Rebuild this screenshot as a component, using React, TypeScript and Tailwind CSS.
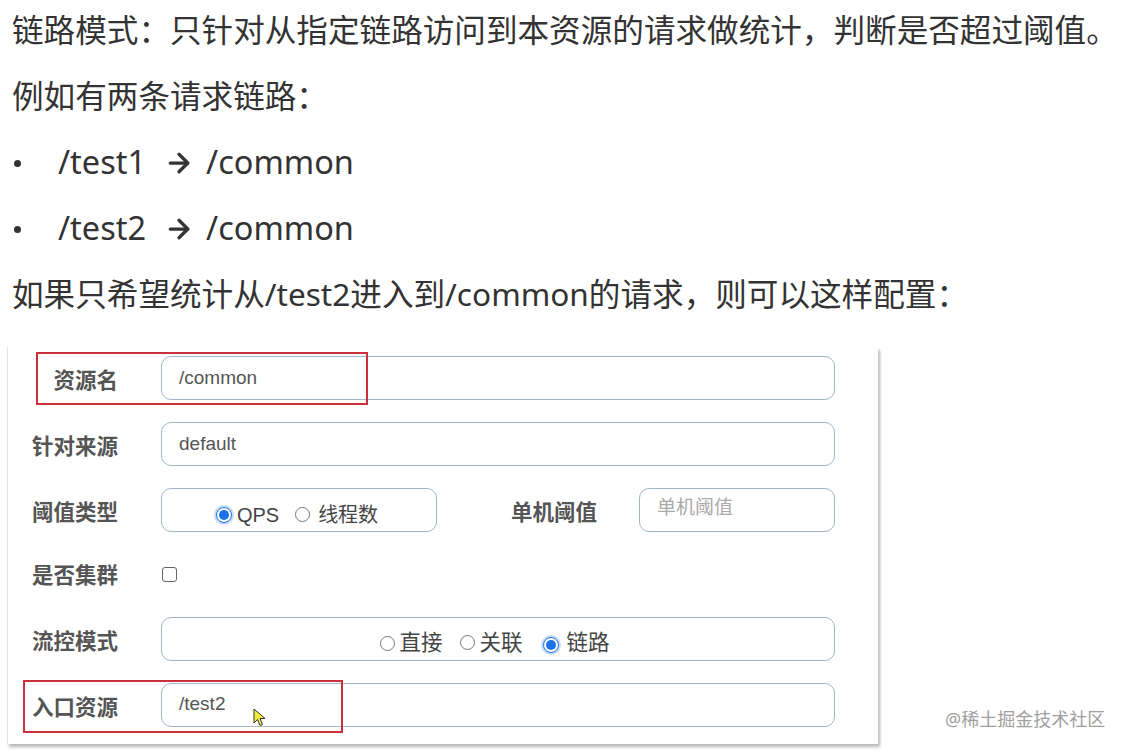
import React from 'react'
import { ArrowRight } from 'lucide-react'

const cjk = { fontFamily: '"Noto Sans", "Noto Sans CJK SC", sans-serif' }
const form = { fontFamily: '"Liberation Sans", "Noto Sans CJK SC", sans-serif' }

const Radio: React.FC<{ checked?: boolean }> = ({ checked }) =>
  checked ? (
    <span className="inline-flex h-[16px] w-[16px] items-center justify-center rounded-full border-[1.5px] border-[#1a73e8] bg-white shadow-[0_0_0_2px_#c7dcf7]">
      <span className="h-[10px] w-[10px] rounded-full bg-[#1a73e8]" />
    </span>
  ) : (
    <span className="inline-block h-[15px] w-[15px] rounded-full border-[1.5px] border-[#777] bg-white" />
  )

const Label: React.FC<{ children: React.ReactNode }> = ({ children }) => (
  <div className="w-[110px] pt-[9px] text-right text-[21.5px] font-bold text-[#555]">{children}</div>
)

const boxCls = 'flex h-[44px] items-center rounded-[10px] border border-[#a3b5c6] bg-white'

const Route: React.FC<{ from: string }> = ({ from }) => (
  <div className="flex h-[66px] items-center text-[32.5px]">
    <span className="ml-[2px] mr-[37px] mt-[2px] h-[7px] w-[7px] shrink-0 rounded-full bg-[#333]" />
    <span>{from}</span>
    <ArrowRight className="ml-[18px] mr-[12px] mt-[2px]" size={30} strokeWidth={2.6} color="#333" />
    <span>/common</span>
  </div>
)

export default function App() {
  return (
    <div className="relative h-[752px] w-[1126px] overflow-hidden bg-white text-[#333]" style={cjk}>
      <div className="whitespace-nowrap pl-[12px] text-[31.6px]">
        <div className="-mt-[3px] flex h-[66px] items-center">链路模式：只针对从指定链路访问到本资源的请求做统计，判断是否超过阈值。</div>
        <div className="flex h-[66px] items-center">例如有两条请求链路：</div>
        <Route from="/test1" />
        <Route from="/test2" />
        <div className="flex h-[66px] items-center">如果只希望统计从/test2进入到/common的请求，则可以这样配置：</div>
      </div>

      <div
        className="relative ml-[7px] mt-[20px] flex w-[871px] flex-col gap-[22px] border-l border-[#e4e4e4] bg-white pb-[17px] pt-[9px] pr-[43px] shadow-[2px_3px_3px_rgba(0,0,0,0.28)]"
        style={form}
      >
        <div className="flex gap-[43px]">
          <Label>资源名</Label>
          <div className={`${boxCls} flex-1 pl-[17px] text-[19px] text-[#555]`}>/common</div>
        </div>
        <div className="flex gap-[43px]">
          <Label>针对来源</Label>
          <div className={`${boxCls} flex-1 pl-[17px] text-[19px] text-[#555]`}>default</div>
        </div>
        <div className="flex gap-[43px]">
          <Label>阈值类型</Label>
          <div className={`${boxCls} w-[276px] justify-center gap-[8px] pr-[4px] pt-[9px] text-[20px] text-[#444]`}>
            <Radio checked />
            <span className="-ml-[3px]">QPS</span>
            <span className="ml-[8px]"><Radio /></span>
            <span>线程数</span>
          </div>
          <div className="ml-[30px] w-[87px] pt-[9px] text-right text-[21.5px] font-bold text-[#555]">单机阈值</div>
          <div className={`${boxCls} ml-[-1px] flex-1 pb-[4px] pl-[17px] text-[19px] text-[#aaa]`}>单机阈值</div>
        </div>
        <div className="flex h-[41px] items-center gap-[43px]">
          <div className="w-[110px] pt-[4px] text-right text-[21.5px] font-bold text-[#555]">是否集群</div>
          <span className="ml-[1px] inline-block h-[15px] w-[15px] rounded-[3px] border-[1.5px] border-[#666] bg-white" />
        </div>
        <div className="flex gap-[43px]">
          <Label>流控模式</Label>
          <div className={`${boxCls} flex-1 justify-center gap-[4px] pr-[6px] pt-[9px] text-[21.5px] text-[#444]`}>
            <Radio />
            <span>直接</span>
            <span className="ml-[14px]"><Radio /></span>
            <span>关联</span>
            <span className="ml-[16px]"><Radio checked /></span>
            <span className="ml-[4px]">链路</span>
          </div>
        </div>
        <div className="flex gap-[43px]">
          <Label>入口资源</Label>
          <div className={`${boxCls} relative flex-1 pl-[17px] pb-[2px] text-[19px] text-[#555]`}>
            /test2
            <svg className="absolute left-[91px] top-[24px]" width="13" height="19" viewBox="0 0 13 19">
              <path d="M1 1 L1 15 L4.5 11.5 L7 17.5 L9.5 16.5 L7 10.5 L12 10.5 Z" fill="#f2ef3a" stroke="#333" strokeWidth="1" strokeLinejoin="round" />
            </svg>
          </div>
        </div>

        <div className="pointer-events-none absolute left-[28px] top-[5px] h-[53px] w-[332px] border-2 border-[#c9303c]" />
        <div className="pointer-events-none absolute left-[15px] top-[333px] h-[53px] w-[320px] border-2 border-[#c9303c]" />
      </div>

      <div className="absolute left-[945px] top-[706px] text-[18px] text-[#a0a0a0]" style={cjk}>@稀土掘金技术社区</div>
    </div>
  )
}
